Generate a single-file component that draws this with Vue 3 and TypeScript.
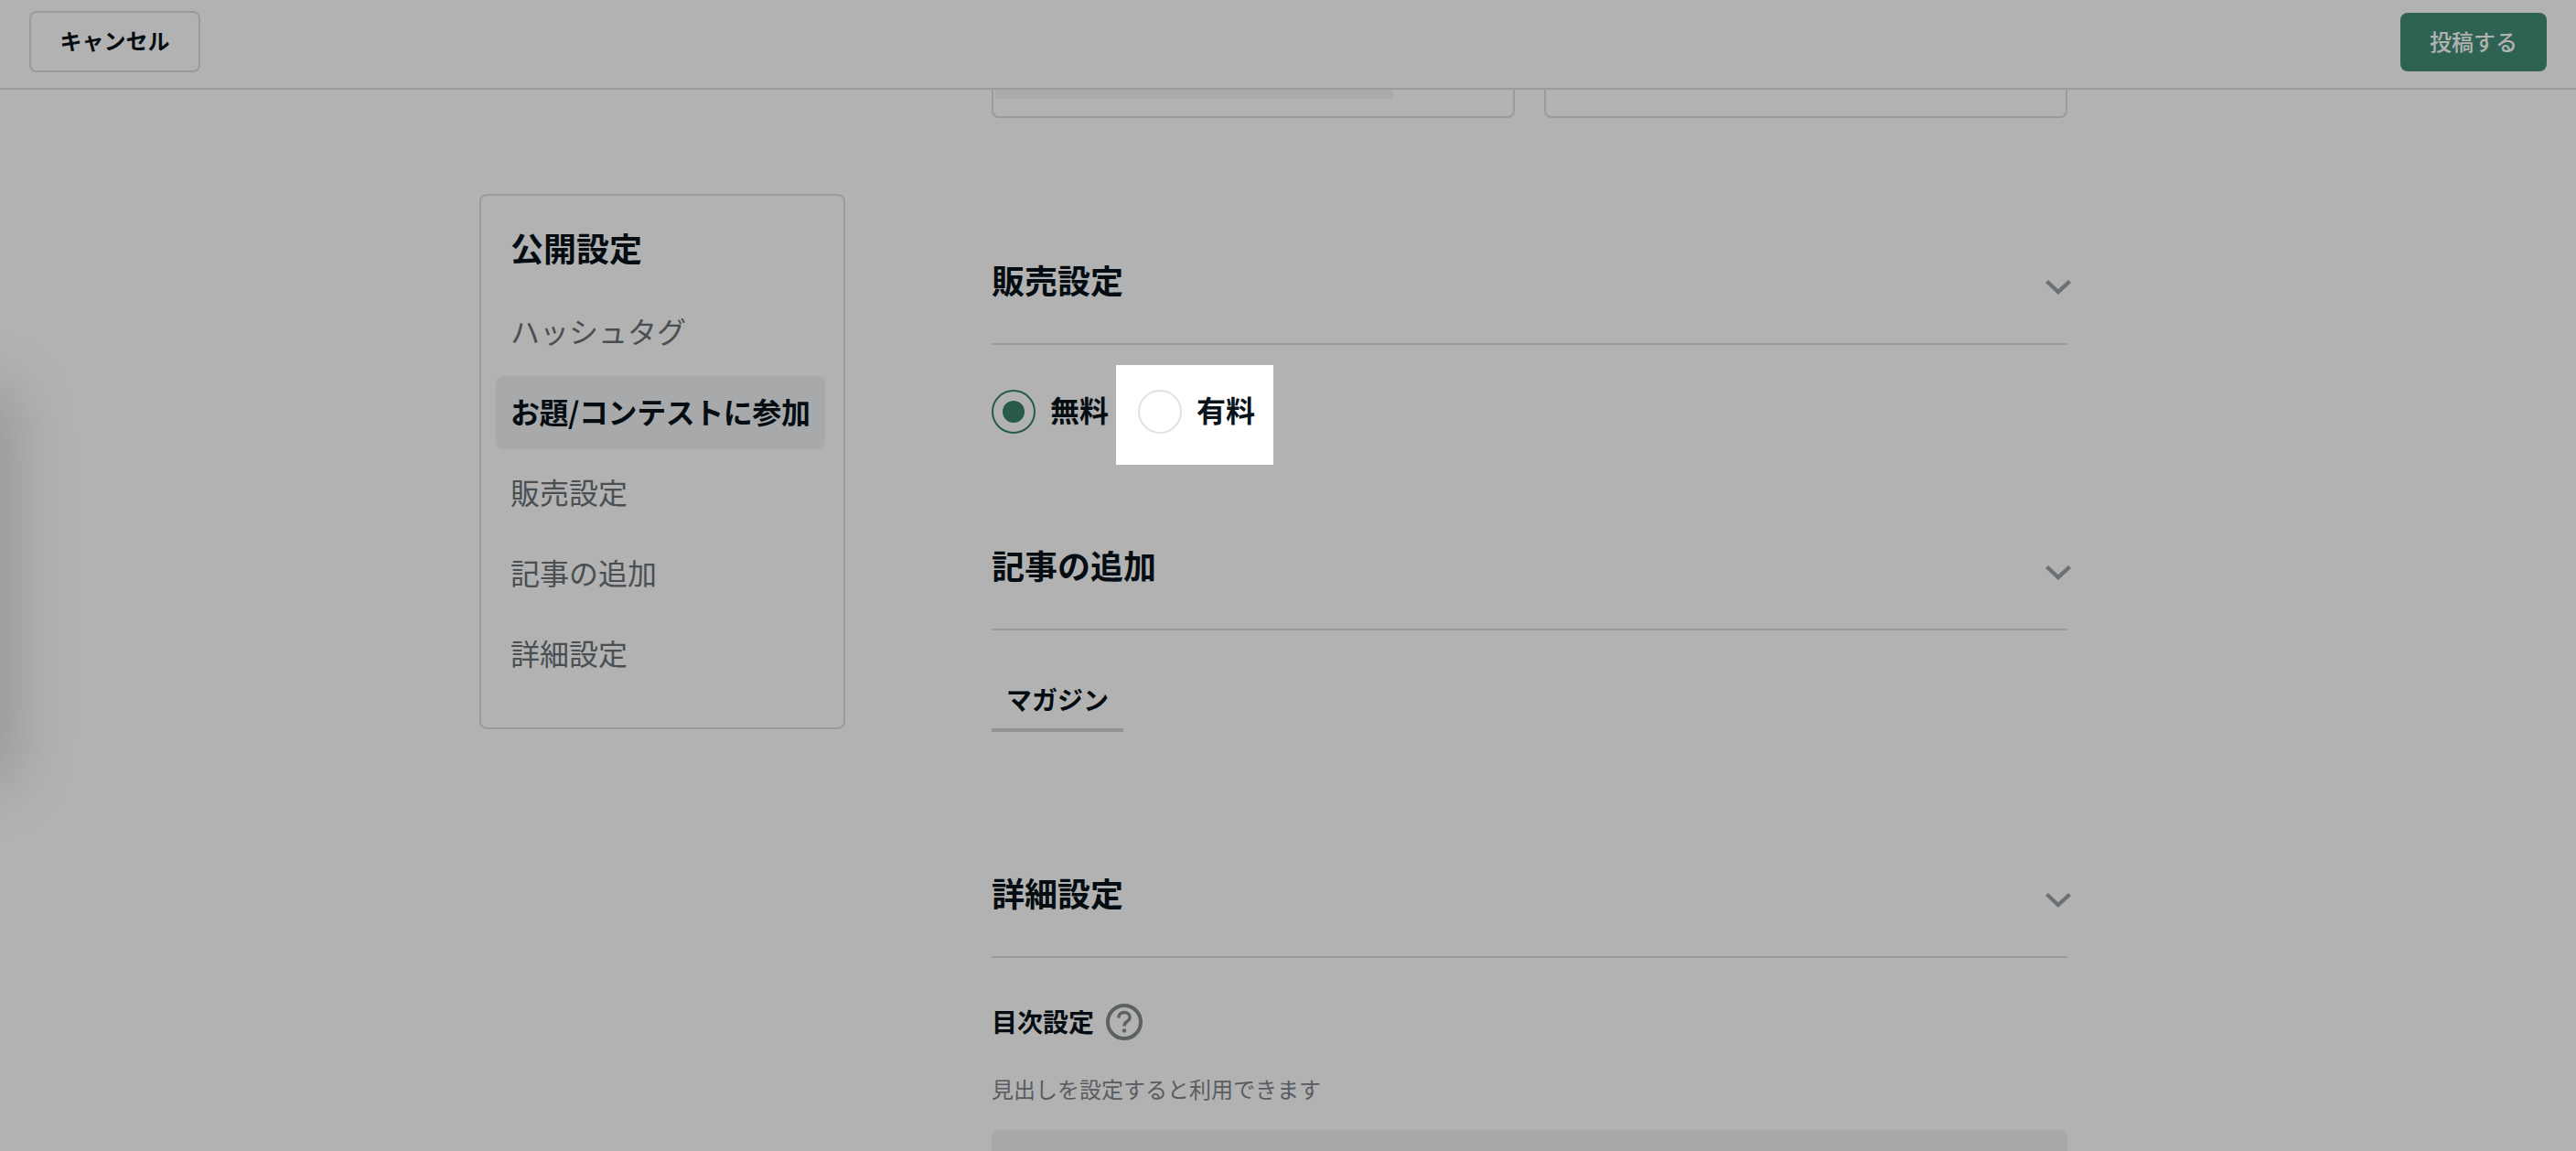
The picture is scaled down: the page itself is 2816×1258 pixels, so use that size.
<script setup lang="ts">
const navItems: { label: string; active?: boolean }[] = [
  { label: 'ハッシュタグ' },
  { label: 'お題/コンテストに参加', active: true },
  { label: '販売設定' },
  { label: '記事の追加' },
  { label: '詳細設定' },
]
</script>

<template>
  <div class="page">
    <div class="edge-shadow"></div>

    <header class="topbar">
      <button class="btn-cancel">キャンセル</button>
      <button class="btn-post">投稿する</button>
    </header>

    <div class="body">
      <aside class="nav">
        <h2 class="nav-title">公開設定</h2>
        <ul class="nav-list">
          <li v-for="item in navItems" :key="item.label" class="nav-item" :class="{ active: item.active }">
            {{ item.label }}
          </li>
        </ul>
      </aside>

      <main class="main">
        <div class="boxes">
          <div class="box"><div class="box-bar"></div></div>
          <div class="box"></div>
        </div>

        <section class="section sale">
          <div class="section-head">
            <h3>販売設定</h3>
            <svg class="chevron" width="28" height="17" viewBox="0 0 28 17" fill="none">
              <path d="M1.5 2.5 14 14 26.5 2.5" stroke="#99a4ac" stroke-width="4.4" />
            </svg>
          </div>
          <div class="radios">
            <label class="radio">
              <span class="ring checked"><span class="dot"></span></span>
              <span class="radio-text">無料</span>
            </label>
            <label class="radio spot">
              <span class="ring"></span>
              <span class="radio-text">有料</span>
            </label>
          </div>
        </section>

        <section class="section add">
          <div class="section-head">
            <h3>記事の追加</h3>
            <svg class="chevron" width="28" height="17" viewBox="0 0 28 17" fill="none">
              <path d="M1.5 2.5 14 14 26.5 2.5" stroke="#99a4ac" stroke-width="4.4" />
            </svg>
          </div>
          <div class="tab">マガジン</div>
        </section>

        <section class="section detail">
          <div class="section-head">
            <h3>詳細設定</h3>
            <svg class="chevron" width="28" height="17" viewBox="0 0 28 17" fill="none">
              <path d="M1.5 2.5 14 14 26.5 2.5" stroke="#99a4ac" stroke-width="4.4" />
            </svg>
          </div>
          <div class="toc-row">
            <span class="toc-label">目次設定</span>
            <svg class="help" width="40" height="40" viewBox="0 0 40 40" fill="none">
              <circle cx="20" cy="20" r="18" stroke="#858b90" stroke-width="4" />
              <path d="M13.8 15.4c0-3.6 2.7-5.9 6.3-5.9 3.5 0 6 2.1 6 5.2 0 2.4-1.3 3.6-3.1 4.8-1.8 1.2-2.8 2.2-2.8 4.3v.7" stroke="#858b90" stroke-width="3.4" />
              <circle cx="20" cy="29.4" r="2.2" fill="#858b90" />
            </svg>
          </div>
          <p class="toc-note">見出しを設定すると利用できます</p>
          <div class="toc-field"></div>
        </section>
      </main>
    </div>
  </div>
</template>

<style scoped>
.page {
  position: relative;
  width: 2816px;
  height: 1258px;
  overflow: hidden;
  background: #fff;
  color: #08131a;
  font-family: "Noto Sans CJK JP", "Noto Sans", sans-serif;
}

.edge-shadow {
  position: absolute;
  left: -70px;
  top: 440px;
  width: 70px;
  height: 400px;
  box-shadow: 0 0 70px 16px rgba(0, 0, 0, 0.16);
}

.topbar {
  position: absolute;
  top: 0;
  left: 0;
  right: 0;
  z-index: 1;
  height: 98px;
  box-sizing: border-box;
  display: flex;
  justify-content: space-between;
  align-items: flex-start;
  padding: 12px 32px 0;
  background: #fff;
  border-bottom: 2px solid #dcdddd;
}

.btn-cancel,
.btn-post {
  font-family: inherit;
  font-size: 24px;
  line-height: 1;
  font-weight: 700;
  border-radius: 8px;
  padding: 0 0 3px;
}

.btn-cancel {
  width: 187px;
  height: 67px;
  color: #08131a;
  background: #fff;
  border: 2px solid #dcdddd;
}

.btn-post {
  width: 160px;
  height: 64px;
  margin-top: 2px;
  color: #fff;
  font-weight: 500;
  background: #428d77;
  border: none;
}

.body {
  display: flex;
  align-items: flex-start;
  padding-left: 524px;
}

.nav {
  width: 400px;
  height: 585px;
  box-sizing: border-box;
  margin-top: 212px;
  margin-right: 160px;
  padding: 0 20px 0 16px;
  border: 2px solid #dcdddd;
  border-radius: 8px;
}

.nav-title {
  margin: 29px 0 0 16px;
  font-size: 36px;
  line-height: 54px;
  font-weight: 700;
}

.nav-list {
  list-style: none;
  margin: 26px 0 0;
  padding: 0;
  display: flex;
  flex-direction: column;
  gap: 8px;
}

.nav-item {
  height: 80px;
  line-height: 76px;
  padding-left: 16px;
  font-size: 32px;
  color: #6b7277;
  border-radius: 8px;
  white-space: nowrap;
}

.nav-item.active {
  color: #08131a;
  font-weight: 700;
  letter-spacing: -0.45px;
  background: #f1f3f5;
}

.main {
  width: 1176px;
}

.boxes {
  display: flex;
  gap: 32px;
}

.box {
  flex: 1;
  height: 129px;
  box-sizing: border-box;
  display: flex;
  align-items: flex-end;
  padding: 0 0 19px 2px;
  border: 2px solid #dcdddd;
  border-radius: 8px;
}

.box-bar {
  width: 435px;
  height: 40px;
  background: #f3f4f6;
}

.section-head {
  display: flex;
  justify-content: space-between;
  align-items: flex-start;
  padding-bottom: 43px;
  border-bottom: 2px solid #dcdddd;
}

.section-head h3 {
  margin: -3px 0 0;
  font-size: 36px;
  line-height: 54px;
  font-weight: 700;
}

.chevron {
  margin: 24px -4px 0 0;
}

.sale {
  margin-top: 152px;
}

.radios {
  display: flex;
  align-items: flex-start;
  margin-top: 22px;
}

.radio {
  display: flex;
  align-items: flex-start;
  gap: 16px;
  padding-top: 27px;
  font-size: 32px;
  font-weight: 700;
}

.radio-text {
  line-height: 43px;
}

.ring {
  width: 48px;
  height: 48px;
  box-sizing: border-box;
  display: flex;
  align-items: center;
  justify-content: center;
  border: 2px solid #e2e2e2;
  border-radius: 50%;
}

.ring.checked {
  border-color: #39816a;
}

.dot {
  width: 24px;
  height: 24px;
  border-radius: 50%;
  background: #39816a;
}

.spot {
  position: relative;
  z-index: 2;
  margin-left: 8px;
  padding: 27px 20px 34px 24px;
  background: #fff;
  box-shadow: 0 0 0 4000px rgba(0, 0, 0, 0.3);
}

.add {
  margin-top: 85px;
}

.tab {
  width: 144px;
  height: 71px;
  box-sizing: border-box;
  margin-top: 40px;
  padding-left: 16px;
  font-size: 28px;
  line-height: 70px;
  font-weight: 700;
  white-space: nowrap;
  border-bottom: 4px solid #d4d4d4;
}

.detail {
  margin-top: 151px;
}

.toc-row {
  display: flex;
  align-items: center;
  gap: 13px;
  margin-top: 50px;
  height: 40px;
}

.toc-label {
  font-size: 28px;
  font-weight: 700;
  padding-bottom: 2px;
}

.toc-note {
  margin: 35px 0 0;
  font-size: 24px;
  line-height: 36px;
  color: #80868b;
}

.toc-field {
  height: 80px;
  margin-top: 27px;
  border-radius: 8px;
  background: #f1f3f5;
}
</style>
